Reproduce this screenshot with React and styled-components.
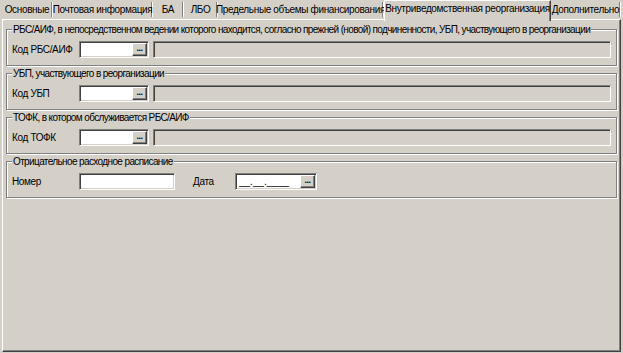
import React from 'react';
import styled, { createGlobalStyle } from 'styled-components';

const GlobalStyle = createGlobalStyle`
  html, body {
    margin: 0;
    padding: 0;
    background: #d4d0c8;
  }
  body {
    font-family: "Liberation Sans", Arial, sans-serif;
    font-size: 10px;
    letter-spacing: -0.35px;
    color: #000;
  }
`;

const Window = styled.div`
  width: 623px;
  height: 353px;
  display: flex;
  flex-direction: column;
  background: #d4d0c8;
  box-sizing: border-box;
  padding: 0 2px 1px 2px;
  overflow: hidden;
`;

const TabRow = styled.div`
  display: flex;
  align-items: flex-end;
  height: 19px;
  position: relative;
  z-index: 2;
`;

const Tab = styled.div`
  box-sizing: border-box;
  width: ${p => p.w}px;
  height: ${p => (p.active ? 21 : 15)}px;
  margin-bottom: ${p => (p.active ? -2 : 2)}px;
  display: flex;
  align-items: center;
  justify-content: center;
  white-space: nowrap;
  padding-bottom: ${p => (p.active ? 5 : 0)}px;
  background: #d4d0c8;
  ${p =>
    p.active
      ? `
    border-top: 1px solid #fff;
    border-left: 1px solid #fff;
    border-right: 1px solid #404040;
    box-shadow: inset -1px 0 0 #808080;
  `
      : `
    border-right: 1px solid #fff;
    box-shadow: inset -1px 0 0 #808080;
  `}
`;

const Panel = styled.div`
  flex: 1;
  box-sizing: border-box;
  border: 1px solid;
  border-color: #fff #404040 #404040 #fff;
  box-shadow: inset -1px -1px 0 #808080;
  padding: 3px 3px 0 3px;
  display: flex;
  flex-direction: column;
  gap: 1px;
`;

const Group = styled.fieldset`
  margin: 0;
  padding: 5px 5px 7px 5px;
  border: 1px solid #808080;
  box-shadow: inset 1px 1px 0 #fff, 1px 1px 0 #fff;
  min-width: 0;
`;

const Legend = styled.legend`
  padding: 0 1px;
  line-height: 13px;
  background: #d4d0c8;
  white-space: nowrap;
  letter-spacing: -0.62px;
`;

const Row = styled.div`
  display: flex;
  align-items: center;
  height: 17px;
`;

const Label = styled.span`
  width: ${p => p.w || 67}px;
  flex: none;
  white-space: nowrap;
`;

const Sunken = styled.div`
  box-sizing: border-box;
  height: 17px;
  border: 1px solid;
  border-color: #808080 #fff #fff #808080;
  box-shadow: inset 1px 1px 0 #404040, inset -1px -1px 0 #d4d0c8;
  background: ${p => (p.disabled ? '#d4d0c8' : '#fff')};
  display: flex;
  align-items: stretch;
  padding: 2px;
  ${p => (p.grow ? 'flex: 1;' : `width: ${p.w}px; flex: none;`)}
  margin-left: ${p => p.ml || 0}px;
`;

const Value = styled.span`
  flex: 1;
  line-height: 12px;
  padding-left: 1px;
  letter-spacing: 0;
  white-space: nowrap;
`;

const DotsButton = styled.div`
  box-sizing: border-box;
  width: 15px;
  margin: -1px -1px -1px 0;
  border: 1px solid;
  border-color: #fff #404040 #404040 #fff;
  box-shadow: inset -1px -1px 0 #808080;
  background: #d4d0c8;
  font-weight: bold;
  font-size: 9px;
  line-height: 9px;
  text-align: center;
  letter-spacing: -0.5px;
`;

const Spacer = styled.span`
  width: ${p => p.w}px;
  flex: none;
`;

const tabs = [
  { t: 'Основные', w: 51 },
  { t: 'Почтовая информация', w: 100 },
  { t: 'БА', w: 31 },
  { t: 'ЛБО', w: 34 },
  { t: 'Предельные объемы финансирования', w: 166 },
  { t: 'Внутриведомственная реорганизация', w: 167, active: true },
  { t: 'Дополнительно', w: 70 },
];

function CodeField({ label, title }) {
  return (
    <Group>
      <Legend>{title}</Legend>
      <Row>
        <Label>{label}</Label>
        <Sunken w={70}>
          <Value />
          <DotsButton>...</DotsButton>
        </Sunken>
        <Sunken grow disabled ml={4} />
      </Row>
    </Group>
  );
}

export default function App() {
  return (
    <>
      <GlobalStyle />
      <Window>
        <TabRow>
          {tabs.map(tab => (
            <Tab key={tab.t} w={tab.w} active={tab.active}>
              {tab.t}
            </Tab>
          ))}
        </TabRow>
        <Panel>
          <CodeField
            title="РБС/АИФ, в непосредственном ведении которого находится, согласно прежней (новой) подчиненности, УБП, участвующего в реорганизации"
            label="Код РБС/АИФ"
          />
          <CodeField title="УБП, участвующего в реорганизации" label="Код УБП" />
          <CodeField title="ТОФК, в котором обслуживается РБС/АИФ" label="Код ТОФК" />
          <Group>
            <Legend>Отрицательное расходное расписание</Legend>
            <Row>
              <Label>Номер</Label>
              <Sunken w={96} />
              <Spacer w={18} />
              <Label w={42}>Дата</Label>
              <Sunken w={82}>
                <Value>__.__.____</Value>
                <DotsButton>...</DotsButton>
              </Sunken>
            </Row>
          </Group>
        </Panel>
      </Window>
    </>
  );
}
